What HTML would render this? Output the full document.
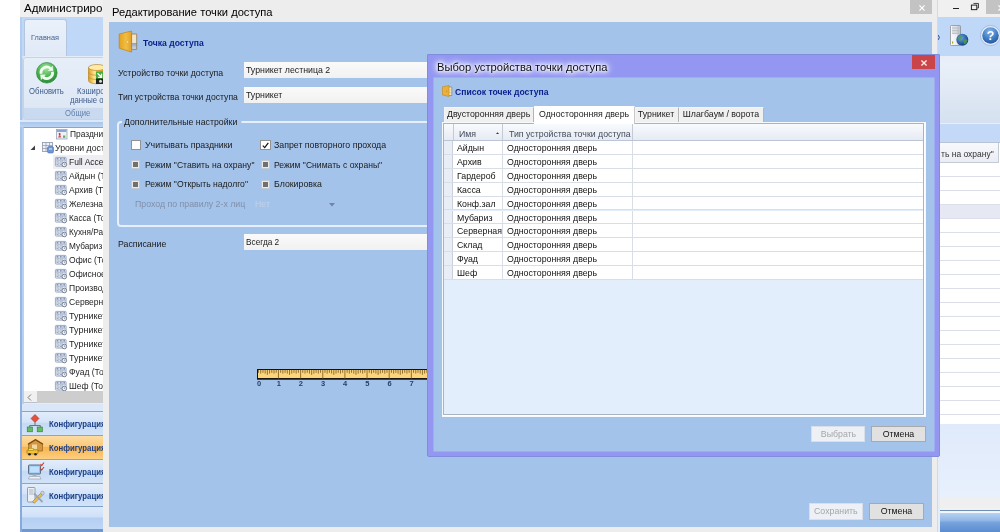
<!DOCTYPE html>
<html lang="ru"><head><meta charset="utf-8"><title>Редактирование точки доступа</title>
<style>
*{box-sizing:border-box;margin:0;padding:0}
html,body{width:1000px;height:532px;overflow:hidden;background:#fff}
body{position:relative;font-family:"Liberation Sans","DejaVu Sans",sans-serif;font-size:9.2px;color:#1a1a1a;filter:blur(.55px)}
.a{position:absolute;white-space:nowrap}
.t{position:absolute;white-space:nowrap;line-height:12px;height:12px;font-size:9.2px;transform:scaleX(.955);transform-origin:0 50%}
svg{position:absolute;overflow:visible}
/* main window */
#mw{left:20px;top:0;width:980px;height:532px;background:#e3ecf8;overflow:hidden}
#mwt{left:0;top:0;width:980px;height:17px;background:#f0f0f0}
#tabs{left:0;top:17px;width:980px;height:39px;background:#bfd8f8}
#tab1{left:3.500px;top:1.500px;width:43.500px;height:38.500px;background:linear-gradient(#eaf1fa,#dfe9f6);border:1px solid #b4c6df;border-bottom:none;border-radius:3px 3px 0 0}
#rib{left:2px;top:56px;width:981px;height:67px;background:linear-gradient(#e6edf8 0,#e9f0f9 12%,#dfe8f4 55%,#d5e1f0 100%);border-left:1px solid #c3d3ea;border-radius:3px 0 0 3px}
#grp{left:0;top:1px;width:120px;height:63px;border:1px solid #c3d3ea;border-radius:3px;background:linear-gradient(#e6eef8 0,#dee8f5 81%,#c9daf0 82%,#c9daf0 100%)}
#lb{left:0;top:17px;width:2px;height:515px;background:linear-gradient(#b5cef0,#9dbce8 40%,#86a9dc 100%)}
#lb2{left:2px;top:121px;width:2px;height:411px;background:#b7d0f2}
#band{left:1px;top:122.500px;width:979px;height:19px;background:#c3d9f7;border-top:1px solid #e6effb}
/* tree */
#tree{left:3px;top:126.500px;width:91px;height:264.500px;background:#fff;border-top:1px solid #98a2b2;border-left:1px solid #c5cedb}
#gap{left:0;top:120px;width:100px;height:7px;background:linear-gradient(#dce8f8 0,#dce8f8 22%,#a9c6ec 30%,#bdd4f2 100%)}
.ti{position:absolute;font-size:9.7px;line-height:14px;height:14px;white-space:nowrap;color:#1e1e1e;transform:scaleX(.865);transform-origin:0 50%}
#hsb{left:4px;top:390.500px;width:90px;height:12.500px;background:#f0f0f0;border-bottom:1px solid #b9c0cb}
#hth{left:12.500px;top:0;width:80px;height:12px;background:#cdcdcd}
#nav{left:2px;top:404px;width:92px;height:128px;background:linear-gradient(#d9e7f9 0,#d9e7f9 102px,#7f9fc8 102.200px,#7f9fc8 103px,#dce9fa 103.500px,#cfe0f7 113px,#b4cff2 114px,#bed6f5 124.500px,#6f97d0 125.500px,#6f97d0 128px)}
.ni{position:absolute;left:0;width:92px;height:24px;background:linear-gradient(#e2edfb 0,#d3e3f8 45%,#c4daf5 50%,#d2e3f8 100%);border-top:1px solid #86a5d0}
.ni.sel{background:linear-gradient(#fcdca4 0,#fbc977 45%,#f9b44c 50%,#fccf82 100%)}
.nt{position:absolute;left:26.500px;top:6.300px;font-weight:bold;font-size:8.4px;line-height:12px;color:#1c3f87;transform:scaleX(.93);transform-origin:0 50%}
/* right grid */
#rg{left:920px;top:141.500px;width:60px;height:282.500px;background:#fff;border-top:1px solid #b8c4d6}
#rgh{left:0;top:0;width:58.5px;height:20px;background:linear-gradient(#f7f9fc,#e9edf4);border-right:1px solid #c5cbd6;border-bottom:1px solid #c5cbd6}
.rr{position:absolute;left:0;width:60px;height:1px;background:#dcdfe8}
/* dialog 1 */
#d1{left:103px;top:0;width:835px;height:532px;background:#ededed;border-right:1px solid #d9d9d9}
#d1in{left:6px;top:22px;width:823px;height:505px;background:#a4c3ea}
#d1x{left:807px;top:0;width:22px;height:14px;background:#c3c3c3}
.fld{position:absolute;background:linear-gradient(#fafafa,#f1f1f1);height:15.500px}
.btn{position:absolute;height:16px;border:1px solid #a9a9a9;background:#e1e1e1;text-align:center;font-size:9.2px;line-height:14px;color:#111}
.btn.dis{background:#edf0f5;border-color:#d9dfe8;color:#a6a6a6}
.cb{position:absolute;width:10.500px;height:9.500px;background:#fff;border:1px solid #939393}
.cbd{position:absolute;width:9px;height:9px;background:#e9e9e9;border:1px solid #c4c8cf}
.cbd i{position:absolute;left:1px;top:1px;width:5px;height:5px;background:#707070}
#gb{border:2.400px solid #e6effb;border-radius:4px}
/* dialog 2 */
#d2{left:427px;top:54px;width:512.600px;height:402.500px;background:#9397f1;border:1px solid #7f8ddb;border-radius:1px 1px 2px 2px}
#d2in{left:5.500px;top:23px;width:500px;height:372.500px;background:#a4c3ea;box-shadow:0 0 0 .7px #a6b6ee}
#d2x{left:484px;top:0;width:23px;height:14px;background:#c9454a}
.tab{position:absolute;top:52px;height:14.500px;background:#f0f0f0;border:1px solid #f3f5f8;border-right-color:#b4b4b4;border-bottom:none;font-size:9.2px;line-height:13.500px;text-align:center;color:#1a1a1a}
.tab.sel{top:50.500px;height:18.500px;background:#fff;line-height:15.500px;z-index:2;border-color:#fff;border-right-color:#c8c8c8}
.tab span,.btn span,.gc span,.row span{display:inline-block;transform:scaleX(.955);transform-origin:50% 50%}
.gc span,.row span{transform-origin:0 50%}
#tp{width:483.500px;height:295.500px;background:#fff;border:1.500px solid #f7fafd}
#gr{left:0;top:0;width:480.500px;height:292.500px;background:#e3eefd;border:1px solid #a9b4c2}
#gh{left:0;top:0;width:478.500px;height:17.500px;background:linear-gradient(#f8fafd,#e6ebf3);border-bottom:1px solid #bcc5d3}
.gc{position:absolute;top:0;height:16.500px;border-right:1px solid #c3cad6;font-size:9.2px;line-height:20px;color:#444b5a}
.row{position:absolute;left:0;width:478.500px;height:13.9px;background:#fff;border-bottom:1px solid #d9dde6;font-size:9.2px;line-height:15px;color:#111}
.row b{position:absolute;left:0;top:0;width:9px;height:12.9px;background:#e9eef6;border-right:1px solid #c9d0dc}
.row span{position:absolute;top:0}
.row u{position:absolute;top:0;width:1px;height:12.9px;background:#d9dde6}
</style></head><body>

<div id="mw" class="a">
<div id="mwt" class="a"><span class="t" style="left:4px;top:2px;font-size:11.55px;transform:none;color:#000">Администрирование</span>
<div class="a" style="left:933px;top:7.700px;width:6px;height:1.600px;background:#222"></div>
<svg style="left:951.300px;top:2.800px" width="8.300" height="7.500" viewBox="0 0 10 9"><path d="M3 .5h6v5.5h-1.5" fill="none" stroke="#222" stroke-width="1"/><rect x=".5" y="2.5" width="6.5" height="5.5" fill="none" stroke="#222" stroke-width="1.2"/></svg>
<div class="a" style="left:965.500px;top:0;width:15px;height:13.700px;background:#c3c3c3"><svg style="left:12.500px;top:4.700px" width="6" height="6" viewBox="0 0 7 7"><path d="M.5 .5l6 6M6.500 .5l-6 6" stroke="#fff" stroke-width="1.400"/></svg></div>
</div>
<div id="tabs" class="a"><div id="tab1" class="a"></div><span class="t" style="left:11.200px;top:14.700px;font-size:7.700px;color:#44618f">Главная</span>
<svg style="left:930px;top:8px" width="20" height="22" viewBox="0 0 20 22"><defs><linearGradient id="sv" x1="0" x2="1"><stop offset="0" stop-color="#fbfbfb"/><stop offset=".6" stop-color="#eceef1"/><stop offset="1" stop-color="#b4bac3"/></linearGradient><radialGradient id="gl" cx=".4" cy=".35" r=".75"><stop offset="0" stop-color="#6aa3e0"/><stop offset=".6" stop-color="#2a5fa6"/><stop offset="1" stop-color="#10305f"/></radialGradient></defs><rect x=".5" y=".5" width="10" height="20" rx=".8" fill="url(#sv)" stroke="#8b919b" stroke-width=".8"/><path d="M2 2.200h7M2 3.800h7M2 5.400h7M2 7h7M2 8.600h7" stroke="#a4aab3" stroke-width=".7"/><rect x="2" y="16.500" width="1.200" height="2" fill="#9aa81e"/><circle cx="12.300" cy="14.800" r="6" fill="url(#gl)"/><path d="M8 12.500q1.500-3 4-2.500 1 1.500-.5 3t-1 3.500q-2-.5-2.500-4zM13.500 15q2-1.500 4 0-.5 3-3 4.500-1.500-2-1-4.500z" fill="#4f9e50" opacity=".85"/></svg>
<svg style="left:959.500px;top:8px" width="21" height="21" viewBox="0 0 21 21"><defs><radialGradient id="hp" cx=".45" cy=".25" r=".85"><stop offset="0" stop-color="#86b6ea"/><stop offset=".55" stop-color="#3f7cc4"/><stop offset="1" stop-color="#1c4a8e"/></radialGradient></defs><circle cx="10.500" cy="10.500" r="10" fill="#e6eefa" stroke="#8fa9cf" stroke-width=".7"/><circle cx="10.500" cy="10.500" r="8.300" fill="url(#hp)"/><text x="10.500" y="15" font-size="12.500" font-weight="bold" fill="#fff" text-anchor="middle" font-family='"Liberation Sans",sans-serif'>?</text></svg>
<svg style="left:917.500px;top:18px" width="2" height="5" viewBox="0 0 2 5"><path d="M.3 .2Q2.400 2.500 .3 4.800" fill="none" stroke="#2a3f8f" stroke-width="1"/></svg>
</div>
<div id="rib" class="a"><div id="grp" class="a"></div>
<svg style="left:12.7px;top:5.7px" width="21.600" height="21.600" viewBox="0 0 23 23"><defs><radialGradient id="gg" cx=".45" cy=".28" r=".8"><stop offset="0" stop-color="#a2e49c"/><stop offset=".5" stop-color="#4bb552"/><stop offset="1" stop-color="#207f2d"/></radialGradient></defs><circle cx="11.500" cy="11.500" r="11" fill="url(#gg)" stroke="#2b8a36" stroke-width=".7"/><g fill="#f1fbef" stroke="#f1fbef"><path d="M5.500 12.500A6 6 0 0 1 15.400 6.900" fill="none" stroke-width="3"/><path d="M18.200 9.400L17.600 4.200 13 9.300z" stroke-width=".4"/><path d="M17.500 10.500A6 6 0 0 1 7.600 16.100" fill="none" stroke-width="3"/><path d="M4.800 13.600L5.400 18.800 10 13.700z" stroke-width=".4"/></g></svg>
<span class="t" style="left:6.3px;top:29.8px;font-size:8.2px;transform:scaleX(.94);color:#3d5b8c;">Обновить</span>
<svg style="left:65.1px;top:7.5px" width="20" height="21" viewBox="0 0 20 21"><defs><linearGradient id="db" x1="0" x2="1"><stop offset="0" stop-color="#dba024"/><stop offset=".35" stop-color="#ffe592"/><stop offset="1" stop-color="#d39418"/></linearGradient></defs><path d="M.5 3.500v13c0 2 3.500 3.200 8.500 3.200s8.500-1.200 8.500-3.200v-13z" fill="url(#db)" stroke="#b07a14" stroke-width=".6"/><ellipse cx="9" cy="3.500" rx="8.500" ry="3" fill="#ffeaa8" stroke="#b07a14" stroke-width=".6"/><path d="M.5 8c0 2 3.500 3.200 8.500 3.200s8.500-1.200 8.500-3.200M.5 12.300c0 2 3.500 3.200 8.500 3.200s8.500-1.200 8.500-3.200" fill="none" stroke="#b9841c" stroke-width=".6"/><rect x="8" y="7.800" width="11" height="12.200" fill="#20251f"/><rect x="8" y="7.800" width="11" height="6.700" fill="#4bab3c"/><path d="M9.500 9.300l3.500 3.500M13.500 9.800v3.500H10" fill="none" stroke="#fff" stroke-width="1.300"/><circle cx="12.500" cy="17.300" r="1.500" fill="#ddd"/></svg>
<span class="t" style="left:54.4px;top:29.6px;font-size:8.2px;transform:scaleX(.94);color:#3d5b8c;">Кэширование</span>
<span class="t" style="left:46.9px;top:39px;font-size:8.2px;transform:scaleX(.94);color:#3d5b8c;">данные о</span>
<span class="t" style="left:42.4px;top:51.9px;font-size:8.2px;transform:scaleX(.94);color:#3d5b8c;color:#6480ab">Общие</span>
</div>
<div id="band" class="a"></div>
<div id="lb" class="a"></div><div id="lb2" class="a"></div>
<div id="gap" class="a"></div>
<div id="tree" class="a">
<svg style="left:32px;top:1.3px" width="12" height="11" viewBox="0 0 12 11"><rect x=".5" y=".5" width="10.500" height="9.500" fill="#eef1f7" stroke="#98a4ba" stroke-width=".8"/><rect x="1" y="1" width="9.500" height="2" fill="#8ea6d6"/><path d="M2 8.500l1.800-3.500 1.500 3.500z" fill="#d9534f"/><circle cx="3.600" cy="5" r="1" fill="#c9302c"/><rect x="7" y="6.500" width="2.300" height="2.300" fill="#5cae5c"/></svg>
<span class="ti" style="left:46px;top:-0.7px">Праздники</span>
<svg style="left:6px;top:17.3px" width="6" height="6" viewBox="0 0 6 6"><path d="M5 .5v4.500H.5z" fill="#404040"/></svg>
<svg style="left:18px;top:14.3px" width="13" height="12" viewBox="0 0 13 12"><rect x=".5" y=".5" width="10" height="9" fill="#eef2f8" stroke="#8a96aa" stroke-width=".8"/><path d="M.5 3.500h10M.5 6.500h10M4 .5v9M7.500 .5v9" stroke="#8a96aa" stroke-width=".7"/><rect x="5.500" y="4.500" width="6" height="6.500" rx="1.500" fill="#6f95d2" stroke="#4a6fae" stroke-width=".6"/><rect x="7" y="6" width="3" height="2" fill="#a9c4ec"/></svg>
<span class="ti" style="left:31px;top:13.3px;transform:scaleX(.9)">Уровни доступа</span>
<div class="a" style="left:29px;top:27.3px;width:70px;height:14px;background:#eeeef3"></div>
<svg style="left:30.8px;top:29.7px" width="12" height="10" viewBox="0 0 12 10"><rect x=".4" y=".4" width="10.700" height="8.700" rx=".8" fill="#e9edf4" stroke="#94a3bc" stroke-width=".9"/><path d="M.5 3.400h10.500M.5 6.200h10.500M3.800 .5v8.500M7.300 .5v8.500" stroke="#a5b2c8" stroke-width=".7"/><path d="M1.500 1.900h1.600M5 1.900h1.600M8.400 1.900h1.600" stroke="#5f78a8" stroke-width="1.100"/><path d="M1.500 4.800h1.600M5 4.800h1.600M1.500 7.500h1.600M5 7.500h1.600" stroke="#9aa8c0" stroke-width="1"/><circle cx="9.300" cy="7.500" r="2.300" fill="#f3f5f9" stroke="#5f6b80" stroke-width=".8"/><path d="M9.300 6.300v1.300h1" fill="none" stroke="#5f6b80" stroke-width=".6"/></svg>
<span class="ti" style="left:45.300px;top:27.3px;transform:scaleX(0.88)">Full Access</span>
<svg style="left:30.8px;top:43.699999999999996px" width="12" height="10" viewBox="0 0 12 10"><rect x=".4" y=".4" width="10.700" height="8.700" rx=".8" fill="#e9edf4" stroke="#94a3bc" stroke-width=".9"/><path d="M.5 3.400h10.500M.5 6.200h10.500M3.800 .5v8.500M7.300 .5v8.500" stroke="#a5b2c8" stroke-width=".7"/><path d="M1.500 1.900h1.600M5 1.900h1.600M8.400 1.900h1.600" stroke="#5f78a8" stroke-width="1.100"/><path d="M1.500 4.800h1.600M5 4.800h1.600M1.500 7.500h1.600M5 7.500h1.600" stroke="#9aa8c0" stroke-width="1"/><circle cx="9.300" cy="7.500" r="2.300" fill="#f3f5f9" stroke="#5f6b80" stroke-width=".8"/><path d="M9.300 6.300v1.300h1" fill="none" stroke="#5f6b80" stroke-width=".6"/></svg>
<span class="ti" style="left:45.300px;top:41.3px;transform:scaleX(0.88)">Айдын (Точка)</span>
<svg style="left:30.8px;top:57.699999999999996px" width="12" height="10" viewBox="0 0 12 10"><rect x=".4" y=".4" width="10.700" height="8.700" rx=".8" fill="#e9edf4" stroke="#94a3bc" stroke-width=".9"/><path d="M.5 3.400h10.500M.5 6.200h10.500M3.800 .5v8.500M7.300 .5v8.500" stroke="#a5b2c8" stroke-width=".7"/><path d="M1.500 1.900h1.600M5 1.900h1.600M8.400 1.900h1.600" stroke="#5f78a8" stroke-width="1.100"/><path d="M1.500 4.800h1.600M5 4.800h1.600M1.500 7.500h1.600M5 7.500h1.600" stroke="#9aa8c0" stroke-width="1"/><circle cx="9.300" cy="7.500" r="2.300" fill="#f3f5f9" stroke="#5f6b80" stroke-width=".8"/><path d="M9.300 6.300v1.300h1" fill="none" stroke="#5f6b80" stroke-width=".6"/></svg>
<span class="ti" style="left:45.300px;top:55.3px;transform:scaleX(0.88)">Архив (Точка)</span>
<svg style="left:30.8px;top:71.7px" width="12" height="10" viewBox="0 0 12 10"><rect x=".4" y=".4" width="10.700" height="8.700" rx=".8" fill="#e9edf4" stroke="#94a3bc" stroke-width=".9"/><path d="M.5 3.400h10.500M.5 6.200h10.500M3.800 .5v8.500M7.300 .5v8.500" stroke="#a5b2c8" stroke-width=".7"/><path d="M1.500 1.900h1.600M5 1.900h1.600M8.400 1.900h1.600" stroke="#5f78a8" stroke-width="1.100"/><path d="M1.500 4.800h1.600M5 4.800h1.600M1.500 7.500h1.600M5 7.500h1.600" stroke="#9aa8c0" stroke-width="1"/><circle cx="9.300" cy="7.500" r="2.300" fill="#f3f5f9" stroke="#5f6b80" stroke-width=".8"/><path d="M9.300 6.300v1.300h1" fill="none" stroke="#5f6b80" stroke-width=".6"/></svg>
<span class="ti" style="left:45.300px;top:69.3px;transform:scaleX(0.85)">Железная дверь</span>
<svg style="left:30.8px;top:85.7px" width="12" height="10" viewBox="0 0 12 10"><rect x=".4" y=".4" width="10.700" height="8.700" rx=".8" fill="#e9edf4" stroke="#94a3bc" stroke-width=".9"/><path d="M.5 3.400h10.500M.5 6.200h10.500M3.800 .5v8.500M7.300 .5v8.500" stroke="#a5b2c8" stroke-width=".7"/><path d="M1.500 1.900h1.600M5 1.900h1.600M8.400 1.900h1.600" stroke="#5f78a8" stroke-width="1.100"/><path d="M1.500 4.800h1.600M5 4.800h1.600M1.500 7.500h1.600M5 7.500h1.600" stroke="#9aa8c0" stroke-width="1"/><circle cx="9.300" cy="7.500" r="2.300" fill="#f3f5f9" stroke="#5f6b80" stroke-width=".8"/><path d="M9.300 6.300v1.300h1" fill="none" stroke="#5f6b80" stroke-width=".6"/></svg>
<span class="ti" style="left:45.300px;top:83.3px;transform:scaleX(0.85)">Касса (Точка)</span>
<svg style="left:30.8px;top:99.7px" width="12" height="10" viewBox="0 0 12 10"><rect x=".4" y=".4" width="10.700" height="8.700" rx=".8" fill="#e9edf4" stroke="#94a3bc" stroke-width=".9"/><path d="M.5 3.400h10.500M.5 6.200h10.500M3.800 .5v8.500M7.300 .5v8.500" stroke="#a5b2c8" stroke-width=".7"/><path d="M1.500 1.900h1.600M5 1.900h1.600M8.400 1.900h1.600" stroke="#5f78a8" stroke-width="1.100"/><path d="M1.500 4.800h1.600M5 4.800h1.600M1.500 7.500h1.600M5 7.500h1.600" stroke="#9aa8c0" stroke-width="1"/><circle cx="9.300" cy="7.500" r="2.300" fill="#f3f5f9" stroke="#5f6b80" stroke-width=".8"/><path d="M9.300 6.300v1.300h1" fill="none" stroke="#5f6b80" stroke-width=".6"/></svg>
<span class="ti" style="left:45.300px;top:97.3px;transform:scaleX(0.85)">Кухня/Раздевалка</span>
<svg style="left:30.8px;top:113.7px" width="12" height="10" viewBox="0 0 12 10"><rect x=".4" y=".4" width="10.700" height="8.700" rx=".8" fill="#e9edf4" stroke="#94a3bc" stroke-width=".9"/><path d="M.5 3.400h10.500M.5 6.200h10.500M3.800 .5v8.500M7.300 .5v8.500" stroke="#a5b2c8" stroke-width=".7"/><path d="M1.500 1.900h1.600M5 1.900h1.600M8.400 1.900h1.600" stroke="#5f78a8" stroke-width="1.100"/><path d="M1.500 4.800h1.600M5 4.800h1.600M1.500 7.500h1.600M5 7.500h1.600" stroke="#9aa8c0" stroke-width="1"/><circle cx="9.300" cy="7.500" r="2.300" fill="#f3f5f9" stroke="#5f6b80" stroke-width=".8"/><path d="M9.300 6.300v1.300h1" fill="none" stroke="#5f6b80" stroke-width=".6"/></svg>
<span class="ti" style="left:45.300px;top:111.3px;transform:scaleX(0.85)">Мубариз (Точка)</span>
<svg style="left:30.8px;top:127.7px" width="12" height="10" viewBox="0 0 12 10"><rect x=".4" y=".4" width="10.700" height="8.700" rx=".8" fill="#e9edf4" stroke="#94a3bc" stroke-width=".9"/><path d="M.5 3.400h10.500M.5 6.200h10.500M3.800 .5v8.500M7.300 .5v8.500" stroke="#a5b2c8" stroke-width=".7"/><path d="M1.500 1.900h1.600M5 1.900h1.600M8.400 1.900h1.600" stroke="#5f78a8" stroke-width="1.100"/><path d="M1.500 4.800h1.600M5 4.800h1.600M1.500 7.500h1.600M5 7.500h1.600" stroke="#9aa8c0" stroke-width="1"/><circle cx="9.300" cy="7.500" r="2.300" fill="#f3f5f9" stroke="#5f6b80" stroke-width=".8"/><path d="M9.300 6.300v1.300h1" fill="none" stroke="#5f6b80" stroke-width=".6"/></svg>
<span class="ti" style="left:45.300px;top:125.3px;transform:scaleX(0.88)">Офис (Точка)</span>
<svg style="left:30.8px;top:141.70000000000002px" width="12" height="10" viewBox="0 0 12 10"><rect x=".4" y=".4" width="10.700" height="8.700" rx=".8" fill="#e9edf4" stroke="#94a3bc" stroke-width=".9"/><path d="M.5 3.400h10.500M.5 6.200h10.500M3.800 .5v8.500M7.300 .5v8.500" stroke="#a5b2c8" stroke-width=".7"/><path d="M1.500 1.900h1.600M5 1.900h1.600M8.400 1.900h1.600" stroke="#5f78a8" stroke-width="1.100"/><path d="M1.500 4.800h1.600M5 4.800h1.600M1.500 7.500h1.600M5 7.500h1.600" stroke="#9aa8c0" stroke-width="1"/><circle cx="9.300" cy="7.500" r="2.300" fill="#f3f5f9" stroke="#5f6b80" stroke-width=".8"/><path d="M9.300 6.300v1.300h1" fill="none" stroke="#5f6b80" stroke-width=".6"/></svg>
<span class="ti" style="left:45.300px;top:139.3px;transform:scaleX(0.88)">Офисное здание</span>
<svg style="left:30.8px;top:155.70000000000002px" width="12" height="10" viewBox="0 0 12 10"><rect x=".4" y=".4" width="10.700" height="8.700" rx=".8" fill="#e9edf4" stroke="#94a3bc" stroke-width=".9"/><path d="M.5 3.400h10.500M.5 6.200h10.500M3.800 .5v8.500M7.300 .5v8.500" stroke="#a5b2c8" stroke-width=".7"/><path d="M1.500 1.900h1.600M5 1.900h1.600M8.400 1.900h1.600" stroke="#5f78a8" stroke-width="1.100"/><path d="M1.500 4.800h1.600M5 4.800h1.600M1.500 7.500h1.600M5 7.500h1.600" stroke="#9aa8c0" stroke-width="1"/><circle cx="9.300" cy="7.500" r="2.300" fill="#f3f5f9" stroke="#5f6b80" stroke-width=".8"/><path d="M9.300 6.300v1.300h1" fill="none" stroke="#5f6b80" stroke-width=".6"/></svg>
<span class="ti" style="left:45.300px;top:153.3px;transform:scaleX(0.88)">Производство</span>
<svg style="left:30.8px;top:169.70000000000002px" width="12" height="10" viewBox="0 0 12 10"><rect x=".4" y=".4" width="10.700" height="8.700" rx=".8" fill="#e9edf4" stroke="#94a3bc" stroke-width=".9"/><path d="M.5 3.400h10.500M.5 6.200h10.500M3.800 .5v8.500M7.300 .5v8.500" stroke="#a5b2c8" stroke-width=".7"/><path d="M1.500 1.900h1.600M5 1.900h1.600M8.400 1.900h1.600" stroke="#5f78a8" stroke-width="1.100"/><path d="M1.500 4.800h1.600M5 4.800h1.600M1.500 7.500h1.600M5 7.500h1.600" stroke="#9aa8c0" stroke-width="1"/><circle cx="9.300" cy="7.500" r="2.300" fill="#f3f5f9" stroke="#5f6b80" stroke-width=".8"/><path d="M9.300 6.300v1.300h1" fill="none" stroke="#5f6b80" stroke-width=".6"/></svg>
<span class="ti" style="left:45.300px;top:167.3px;transform:scaleX(0.88)">Серверная</span>
<svg style="left:30.8px;top:183.70000000000002px" width="12" height="10" viewBox="0 0 12 10"><rect x=".4" y=".4" width="10.700" height="8.700" rx=".8" fill="#e9edf4" stroke="#94a3bc" stroke-width=".9"/><path d="M.5 3.400h10.500M.5 6.200h10.500M3.800 .5v8.500M7.300 .5v8.500" stroke="#a5b2c8" stroke-width=".7"/><path d="M1.500 1.900h1.600M5 1.900h1.600M8.400 1.900h1.600" stroke="#5f78a8" stroke-width="1.100"/><path d="M1.500 4.800h1.600M5 4.800h1.600M1.500 7.500h1.600M5 7.500h1.600" stroke="#9aa8c0" stroke-width="1"/><circle cx="9.300" cy="7.500" r="2.300" fill="#f3f5f9" stroke="#5f6b80" stroke-width=".8"/><path d="M9.300 6.300v1.300h1" fill="none" stroke="#5f6b80" stroke-width=".6"/></svg>
<span class="ti" style="left:45.300px;top:181.3px;transform:scaleX(0.93)">Турникет лестница 1</span>
<svg style="left:30.8px;top:197.70000000000002px" width="12" height="10" viewBox="0 0 12 10"><rect x=".4" y=".4" width="10.700" height="8.700" rx=".8" fill="#e9edf4" stroke="#94a3bc" stroke-width=".9"/><path d="M.5 3.400h10.500M.5 6.200h10.500M3.800 .5v8.500M7.300 .5v8.500" stroke="#a5b2c8" stroke-width=".7"/><path d="M1.500 1.900h1.600M5 1.900h1.600M8.400 1.900h1.600" stroke="#5f78a8" stroke-width="1.100"/><path d="M1.500 4.800h1.600M5 4.800h1.600M1.500 7.500h1.600M5 7.500h1.600" stroke="#9aa8c0" stroke-width="1"/><circle cx="9.300" cy="7.500" r="2.300" fill="#f3f5f9" stroke="#5f6b80" stroke-width=".8"/><path d="M9.300 6.300v1.300h1" fill="none" stroke="#5f6b80" stroke-width=".6"/></svg>
<span class="ti" style="left:45.300px;top:195.3px;transform:scaleX(0.93)">Турникет лестница 2</span>
<svg style="left:30.8px;top:211.70000000000002px" width="12" height="10" viewBox="0 0 12 10"><rect x=".4" y=".4" width="10.700" height="8.700" rx=".8" fill="#e9edf4" stroke="#94a3bc" stroke-width=".9"/><path d="M.5 3.400h10.500M.5 6.200h10.500M3.800 .5v8.500M7.300 .5v8.500" stroke="#a5b2c8" stroke-width=".7"/><path d="M1.500 1.900h1.600M5 1.900h1.600M8.400 1.900h1.600" stroke="#5f78a8" stroke-width="1.100"/><path d="M1.500 4.800h1.600M5 4.800h1.600M1.500 7.500h1.600M5 7.500h1.600" stroke="#9aa8c0" stroke-width="1"/><circle cx="9.300" cy="7.500" r="2.300" fill="#f3f5f9" stroke="#5f6b80" stroke-width=".8"/><path d="M9.300 6.300v1.300h1" fill="none" stroke="#5f6b80" stroke-width=".6"/></svg>
<span class="ti" style="left:45.300px;top:209.3px;transform:scaleX(0.93)">Турникет вход</span>
<svg style="left:30.8px;top:225.70000000000002px" width="12" height="10" viewBox="0 0 12 10"><rect x=".4" y=".4" width="10.700" height="8.700" rx=".8" fill="#e9edf4" stroke="#94a3bc" stroke-width=".9"/><path d="M.5 3.400h10.500M.5 6.200h10.500M3.800 .5v8.500M7.300 .5v8.500" stroke="#a5b2c8" stroke-width=".7"/><path d="M1.500 1.900h1.600M5 1.900h1.600M8.400 1.900h1.600" stroke="#5f78a8" stroke-width="1.100"/><path d="M1.500 4.800h1.600M5 4.800h1.600M1.500 7.500h1.600M5 7.500h1.600" stroke="#9aa8c0" stroke-width="1"/><circle cx="9.300" cy="7.500" r="2.300" fill="#f3f5f9" stroke="#5f6b80" stroke-width=".8"/><path d="M9.300 6.300v1.300h1" fill="none" stroke="#5f6b80" stroke-width=".6"/></svg>
<span class="ti" style="left:45.300px;top:223.3px;transform:scaleX(0.93)">Турникет выход</span>
<svg style="left:30.8px;top:239.70000000000002px" width="12" height="10" viewBox="0 0 12 10"><rect x=".4" y=".4" width="10.700" height="8.700" rx=".8" fill="#e9edf4" stroke="#94a3bc" stroke-width=".9"/><path d="M.5 3.400h10.500M.5 6.200h10.500M3.800 .5v8.500M7.300 .5v8.500" stroke="#a5b2c8" stroke-width=".7"/><path d="M1.500 1.900h1.600M5 1.900h1.600M8.400 1.900h1.600" stroke="#5f78a8" stroke-width="1.100"/><path d="M1.500 4.800h1.600M5 4.800h1.600M1.500 7.500h1.600M5 7.500h1.600" stroke="#9aa8c0" stroke-width="1"/><circle cx="9.300" cy="7.500" r="2.300" fill="#f3f5f9" stroke="#5f6b80" stroke-width=".8"/><path d="M9.300 6.300v1.300h1" fill="none" stroke="#5f6b80" stroke-width=".6"/></svg>
<span class="ti" style="left:45.300px;top:237.3px;transform:scaleX(0.88)">Фуад (Точка)</span>
<svg style="left:30.8px;top:253.70000000000002px" width="12" height="10" viewBox="0 0 12 10"><rect x=".4" y=".4" width="10.700" height="8.700" rx=".8" fill="#e9edf4" stroke="#94a3bc" stroke-width=".9"/><path d="M.5 3.400h10.500M.5 6.200h10.500M3.800 .5v8.500M7.300 .5v8.500" stroke="#a5b2c8" stroke-width=".7"/><path d="M1.500 1.900h1.600M5 1.900h1.600M8.400 1.900h1.600" stroke="#5f78a8" stroke-width="1.100"/><path d="M1.500 4.800h1.600M5 4.800h1.600M1.500 7.500h1.600M5 7.500h1.600" stroke="#9aa8c0" stroke-width="1"/><circle cx="9.300" cy="7.500" r="2.300" fill="#f3f5f9" stroke="#5f6b80" stroke-width=".8"/><path d="M9.300 6.300v1.300h1" fill="none" stroke="#5f6b80" stroke-width=".6"/></svg>
<span class="ti" style="left:45.300px;top:251.3px;transform:scaleX(0.88)">Шеф (Точка)</span>
</div>
<div id="hsb" class="a"><div id="hth" class="a"></div><svg style="left:3px;top:3px" width="5" height="7" viewBox="0 0 5 7"><path d="M4 .5L1 3.500l3 3" fill="none" stroke="#7a7a7a" stroke-width="1"/></svg></div>
<div id="nav" class="a">
<div class="ni" style="top:7px;height:24px"><span class="nt">Конфигурация</span>
<svg style="left:4px;top:1px" width="18" height="20" viewBox="0 0 18 20"><path d="M9 9.500v3M3.700 15v-2.500h10.600v2.500" fill="none" stroke="#6a6a6a" stroke-width=".9"/><path d="M9 1.500l4 4-4 4-4-4z" fill="#e4503e" stroke="#a8301f" stroke-width=".6"/><rect x="1.200" y="14" width="5.200" height="4.800" fill="#62bd60" stroke="#2f7d32" stroke-width=".6"/><rect x="11.200" y="14" width="5.200" height="4.800" fill="#62bd60" stroke="#2f7d32" stroke-width=".6"/></svg>
</div>
<div class="ni sel" style="top:31px;height:24px"><span class="nt">Конфигурация</span>
<svg style="left:4px;top:1px" width="19" height="20" viewBox="0 0 19 20"><path d="M2.500 6.500l7-4 7 4v7.500h-14z" fill="#d6973c" stroke="#8a5a16" stroke-width=".6"/><path d="M1.500 7l8-5 8 5-1 .8-7-4.300-7 4.300z" fill="#7a4a12"/><rect x="6" y="7.500" width="5" height="5" fill="#f0d9a8"/><rect x="1" y="12.800" width="11" height="4.200" rx="1" fill="#f4c430" stroke="#8a6a00" stroke-width=".6"/><rect x="2.500" y="11.300" width="5" height="2" fill="#f7dc6f" stroke="#8a6a00" stroke-width=".4"/><circle cx="3.500" cy="17.300" r="1.300" fill="#222"/><circle cx="9.500" cy="17.300" r="1.300" fill="#222"/></svg>
</div>
<div class="ni" style="top:55px;height:24px"><span class="nt">Конфигурация</span>
<svg style="left:4px;top:1px" width="20" height="20" viewBox="0 0 20 20"><rect x="2.500" y="4" width="12" height="9" rx=".8" fill="#8fc3f0" stroke="#5f6e86" stroke-width="1"/><rect x="4" y="5.500" width="9" height="6" fill="#bfe0fa"/><path d="M6.500 13.500h4v1.500h-4z" fill="#a9b2c0"/><path d="M3.500 15.500h10.500l1 2.500h-12.500z" fill="#eef1f5" stroke="#8f99aa" stroke-width=".6"/><path d="M14.500 3l1.200 1.500 2.300-3M14.500 7.500l1.200 1.500 2.300-3" fill="none" stroke="#d0392b" stroke-width="1.100"/></svg>
</div>
<div class="ni" style="top:79px;height:23px"><span class="nt">Конфигурация</span>
<svg style="left:4px;top:1px" width="20" height="20" viewBox="0 0 20 20"><rect x="1.500" y="2.500" width="7.500" height="14.500" rx=".8" fill="#eceff3" stroke="#7f8a9c" stroke-width=".8"/><path d="M3 5h4.500M3 7h4.500M3 9h4.500" stroke="#9aa3b2" stroke-width=".8"/><path d="M6.500 16.500l8-8 1.800 1.800-8 8z" fill="#e8be5a" stroke="#8a6a1c" stroke-width=".5"/><path d="M8 8.500l8.500 8.500" stroke="#9aa4b4" stroke-width="1.800"/><circle cx="16.500" cy="8" r="1.800" fill="#c9d0da" stroke="#7f8a9c" stroke-width=".5"/></svg>
</div>
</div>
<div id="rg" class="a"><div id="rgh" class="a"><span class="t" style="left:.5px;top:5px;font-size:9.300px;transform:scaleX(.915);color:#333">ть на охрану"</span></div>
<div class="rr" style="top:33px"></div>
<div class="rr" style="top:47px"></div>
<div class="rr" style="top:61px"></div>
<div class="rr" style="top:75px"></div>
<div class="rr" style="top:89px"></div>
<div class="rr" style="top:103px"></div>
<div class="rr" style="top:117px"></div>
<div class="rr" style="top:131px"></div>
<div class="rr" style="top:145px"></div>
<div class="rr" style="top:159px"></div>
<div class="rr" style="top:173px"></div>
<div class="rr" style="top:187px"></div>
<div class="rr" style="top:201px"></div>
<div class="rr" style="top:215px"></div>
<div class="rr" style="top:229px"></div>
<div class="rr" style="top:243px"></div>
<div class="rr" style="top:257px"></div>
<div class="rr" style="top:271px"></div>
<div class="rr" style="top:285px"></div>
<div class="a" style="left:0;top:62px;width:60px;height:13px;background:#e6e8f3"></div>
</div>
<div class="a" style="left:920px;top:424px;width:60px;height:74px;background:linear-gradient(#dfeafb,#e8f0fc)"></div>
<div class="a" style="left:920px;top:498px;width:60px;height:12px;background:#efefef"></div>
<div class="a" style="left:920px;top:508px;width:60px;height:24px;background:linear-gradient(#f1f1f1 0,#f1f1f1 2px,#6e8fb5 2.200px,#6e8fb5 3.200px,#f2f7fd 3.500px,#f2f7fd 4.500px,#b6d1f2 5px,#8fb5e6 13px,#78a4dd 14px,#5c8ccf 24px)"></div>
</div>

<div id="d1" class="a"><span class="t" style="left:9px;top:5.600px;font-size:11.600px;transform:scaleX(.963);color:#000">Редактирование точки доступа</span>
<div id="d1x" class="a"><svg style="left:9px;top:4.700px" width="6" height="6" viewBox="0 0 7 7"><path d="M.5 .5l6 6M6.500 .5l-6 6" stroke="#fff" stroke-width="1.400"/></svg></div>
<div id="d1in" class="a">
<svg style="left:9px;top:8px" width="20" height="23" viewBox="0 0 20 23"><defs><linearGradient id="dr" x1="0" x2="1"><stop offset="0" stop-color="#e2a224"/><stop offset=".55" stop-color="#f3bd3f"/><stop offset="1" stop-color="#e0a02a"/></linearGradient><linearGradient id="dw" x1="0" y1="0" x2="0" y2="1"><stop offset="0" stop-color="#f7e3b8"/><stop offset=".55" stop-color="#efe6d6"/><stop offset=".6" stop-color="#8fa3bd"/><stop offset="1" stop-color="#d5dde8"/></linearGradient></defs><path d="M13.500 4h5.200v15.400h-5.200z" fill="url(#dw)" stroke="#8a7a5a" stroke-width=".8"/><path d="M1.200 4L13.600 1v21.100L1.200 18.200z" fill="url(#dr)" stroke="#b98420" stroke-width=".7"/><circle cx="9.400" cy="11.900" r="1.300" fill="#fbe08a" stroke="#c9952a" stroke-width=".4"/></svg>
<span class="t" style="left:34px;top:15px;font-weight:bold;font-size:9px;color:#0a1e8c">Точка доступа</span>
<span class="t" style="left:8.5px;top:44.5px;">Устройство точки доступа</span>
<div class="fld" style="left:134.5px;top:40.3px;width:200px"><span class="t" style="left:2.3px;top:1.5px;">Турникет лестница 2</span></div>
<span class="t" style="left:8.5px;top:69px;transform:scaleX(.942)">Тип устройства точки доступа</span>
<div class="fld" style="left:134.5px;top:65.3px;width:200px"><span class="t" style="left:2.3px;top:1.5px;">Турникет</span></div>
<div id="gb" class="a" style="left:7.8px;top:98.8px;width:420px;height:106px"></div>
<span class="t" style="left:13px;top:93.5px;background:#a4c3ea;padding:0 4px 0 2px">Дополнительные настройки</span>
<div class="cb" style="left:21.5px;top:118px"></div><span class="t" style="left:35.5px;top:116.8px;">Учитывать праздники</span>
<div class="cb" style="left:151px;top:118px"><svg style="left:1px;top:.5px" width="7" height="7" viewBox="0 0 7 7"><path d="M.8 3.600l1.900 2L6.300.8" fill="none" stroke="#111" stroke-width="1.200"/></svg></div><span class="t" style="left:165px;top:116.8px;">Запрет повторного прохода</span>
<div class="cbd" style="left:22px;top:138px"><i></i></div><span class="t" style="left:35.5px;top:136.6px;transform:scaleX(.935)">Режим "Ставить на охрану"</span>
<div class="cbd" style="left:152px;top:138px"><i></i></div><span class="t" style="left:165px;top:136.6px;transform:scaleX(.935)">Режим "Снимать с охраны"</span>
<div class="cbd" style="left:22px;top:158px"><i></i></div><span class="t" style="left:35.5px;top:156.4px;transform:scaleX(.935)">Режим "Открыть надолго"</span>
<div class="cbd" style="left:152px;top:158px"><i></i></div><span class="t" style="left:165px;top:156.4px;">Блокировка</span>
<span class="t" style="left:25.5px;top:176px;color:#8090aa">Проход по правилу 2-х лиц</span><span class="t" style="left:145.5px;top:176px;color:#c3d2e8">Нет</span>
<svg style="left:220px;top:181px" width="6" height="4" viewBox="0 0 6 4"><path d="M0 0h6L3 3.500z" fill="#6f84a6"/></svg>
<span class="t" style="left:8.5px;top:216.3px;">Расписание</span>
<div class="fld" style="left:134.5px;top:212.3px;width:200px"><span class="t" style="left:2px;top:1.6px;transform:scaleX(.9)">Всегда 2</span></div>
<svg style="left:148px;top:347px" width="180" height="22" viewBox="0 0 180 22"><rect x=".5" y=".5" width="185" height="9.500" fill="#fbd47e" stroke="#1a1408" stroke-width="1"/><rect x="0" y="9" width="185" height="1.500" fill="#1a1408"/><path d="M1.51 1v2.800M3.73 1v3.600M5.94 1v2.800M8.16 1v3.600M10.38 1v4.800M12.59 1v3.600M14.80 1v2.800M17.02 1v3.600M19.23 1v2.800M21.45 1v8.500M23.66 1v2.800M25.88 1v3.600M28.09 1v2.800M30.31 1v3.600M32.52 1v4.800M34.74 1v3.600M36.95 1v2.800M39.17 1v3.600M41.38 1v2.800M43.60 1v8.500M45.81 1v2.800M48.03 1v3.600M50.24 1v2.800M52.46 1v3.600M54.67 1v4.800M56.89 1v3.600M59.10 1v2.800M61.32 1v3.600M63.53 1v2.800M65.75 1v8.500M67.96 1v2.800M70.18 1v3.600M72.39 1v2.800M74.61 1v3.600M76.82 1v4.800M79.04 1v3.600M81.25 1v2.800M83.47 1v3.600M85.68 1v2.800M87.90 1v8.500M90.11 1v2.800M92.33 1v3.600M94.54 1v2.800M96.76 1v3.600M98.97 1v4.800M101.19 1v3.600M103.40 1v2.800M105.62 1v3.600M107.83 1v2.800M110.05 1v8.500M112.26 1v2.800M114.48 1v3.600M116.69 1v2.800M118.91 1v3.600M121.12 1v4.800M123.34 1v3.600M125.55 1v2.800M127.77 1v3.600M129.99 1v2.800M132.20 1v8.500M134.41 1v2.800M136.63 1v3.600M138.84 1v2.800M141.06 1v3.600M143.28 1v4.800M145.49 1v3.600M147.71 1v2.800M149.92 1v3.600M152.13 1v2.800M154.35 1v8.500M156.56 1v2.800M158.78 1v3.600M161.00 1v2.800M163.21 1v3.600M165.43 1v4.800M167.64 1v3.600M169.85 1v2.800M172.07 1v3.600M174.28 1v2.800M176.50 1v8.500M178.72 1v2.800M180.93 1v3.600M183.15 1v2.800M185.36 1v3.600" stroke="#8a6626" stroke-width=".9" fill="none"/><text x="2.2" y="17" font-size="7.500" font-weight="bold" fill="#27406e" text-anchor="middle" font-family='"Liberation Sans",sans-serif'>0</text><text x="21.8" y="17" font-size="7.500" font-weight="bold" fill="#27406e" text-anchor="middle" font-family='"Liberation Sans",sans-serif'>1</text><text x="43.9" y="17" font-size="7.500" font-weight="bold" fill="#27406e" text-anchor="middle" font-family='"Liberation Sans",sans-serif'>2</text><text x="66.0" y="17" font-size="7.500" font-weight="bold" fill="#27406e" text-anchor="middle" font-family='"Liberation Sans",sans-serif'>3</text><text x="88.2" y="17" font-size="7.500" font-weight="bold" fill="#27406e" text-anchor="middle" font-family='"Liberation Sans",sans-serif'>4</text><text x="110.3" y="17" font-size="7.500" font-weight="bold" fill="#27406e" text-anchor="middle" font-family='"Liberation Sans",sans-serif'>5</text><text x="132.5" y="17" font-size="7.500" font-weight="bold" fill="#27406e" text-anchor="middle" font-family='"Liberation Sans",sans-serif'>6</text><text x="154.7" y="17" font-size="7.500" font-weight="bold" fill="#27406e" text-anchor="middle" font-family='"Liberation Sans",sans-serif'>7</text></svg>
<div class="btn dis" style="left:700.3px;top:481px;width:54px;height:16.500px"><span>Сохранить</span></div>
<div class="btn" style="left:759.7px;top:481px;width:55px;height:16.500px"><span>Отмена</span></div>
</div></div>

<div id="d2" class="a">
<span class="t" style="left:9px;top:5.8px;font-size:11.600px;transform:scaleX(.963);color:#111;text-shadow:0 0 3px #fff,0 0 4px #fff,0 0 6px #fff,0 0 8px #fff,0 0 10px #fff;color:#0c0c14">Выбор устройства точки доступа</span>
<div id="d2x" class="a"><svg style="left:8.500px;top:4.500px" width="6" height="6" viewBox="0 0 7 7"><path d="M.5 .5l6 6M6.500 .5l-6 6" stroke="#ffecec" stroke-width="1.500"/></svg></div>
<div id="d2in" class="a"></div>
<svg style="left:13.8px;top:30.3px" width="10.500" height="12" viewBox="0 0 10.500 12"><path d="M6 2h3.800v8.500H6z" fill="#f3e6bc" stroke="#8f7f5c" stroke-width=".7"/><path d="M6.500 5h3M6.500 7.500h3" stroke="#b9a77c" stroke-width=".5"/><path d="M.5 1.800L7 .5v11L.5 10z" fill="#ecb03a" stroke="#bb8a26" stroke-width=".6"/><circle cx="4.800" cy="6.200" r=".7" fill="#c99028"/></svg>
<span class="t" style="left:27px;top:31px;font-weight:bold;font-size:9px;color:#0a1e8c">Список точек доступа</span>
<div class="tab" style="left:16px;width:90px"><span>Двусторонняя дверь</span></div>
<div class="tab sel" style="left:106px;width:100.5px"><span>Односторонняя дверь</span></div>
<div class="tab" style="left:206.5px;width:44px"><span>Турникет</span></div>
<div class="tab" style="left:250.5px;width:85.5px"><span>Шлагбаум / ворота</span></div>
<div id="tp" class="a" style="left:14px;top:66.5px"><div id="gr" class="a"><div id="gh" class="a">
<div class="gc" style="left:0;width:10px"></div>
<div class="gc" style="left:10px;width:49px;padding-left:5.300px"><span>Имя</span><svg style="left:41.500px;top:8px" width="3" height="2.500" viewBox="0 0 4 3"><path d="M0 2.500h4L2 0z" fill="#333"/></svg></div>
<div class="gc" style="left:59px;width:130px;padding-left:5.500px"><span>Тип устройства точки доступа</span></div>
</div>
<div class="row" style="top:17.5px"><b></b><span style="left:13.300px">Айдын</span><u style="left:58px"></u><span style="left:63px">Односторонняя дверь</span><u style="left:188px"></u></div>
<div class="row" style="top:31.4px"><b></b><span style="left:13.300px">Архив</span><u style="left:58px"></u><span style="left:63px">Односторонняя дверь</span><u style="left:188px"></u></div>
<div class="row" style="top:45.3px"><b></b><span style="left:13.300px">Гардероб</span><u style="left:58px"></u><span style="left:63px">Односторонняя дверь</span><u style="left:188px"></u></div>
<div class="row" style="top:59.2px"><b></b><span style="left:13.300px">Касса</span><u style="left:58px"></u><span style="left:63px">Односторонняя дверь</span><u style="left:188px"></u></div>
<div class="row" style="top:73.1px"><b></b><span style="left:13.300px">Конф.зал</span><u style="left:58px"></u><span style="left:63px">Односторонняя дверь</span><u style="left:188px"></u></div>
<div class="row" style="top:87.0px"><b></b><span style="left:13.300px">Мубариз</span><u style="left:58px"></u><span style="left:63px">Односторонняя дверь</span><u style="left:188px"></u></div>
<div class="row" style="top:100.9px"><b></b><span style="left:13.300px">Серверная</span><u style="left:58px"></u><span style="left:63px">Односторонняя дверь</span><u style="left:188px"></u></div>
<div class="row" style="top:114.8px"><b></b><span style="left:13.300px">Склад</span><u style="left:58px"></u><span style="left:63px">Односторонняя дверь</span><u style="left:188px"></u></div>
<div class="row" style="top:128.7px"><b></b><span style="left:13.300px">Фуад</span><u style="left:58px"></u><span style="left:63px">Односторонняя дверь</span><u style="left:188px"></u></div>
<div class="row" style="top:142.6px"><b></b><span style="left:13.300px">Шеф</span><u style="left:58px"></u><span style="left:63px">Односторонняя дверь</span><u style="left:188px"></u></div>
</div></div>
<div class="btn dis" style="left:383.4px;top:371.2px;width:54px"><span>Выбрать</span></div>
<div class="btn" style="left:442.79999999999995px;top:371.2px;width:55px"><span>Отмена</span></div>
</div>

</body></html>
